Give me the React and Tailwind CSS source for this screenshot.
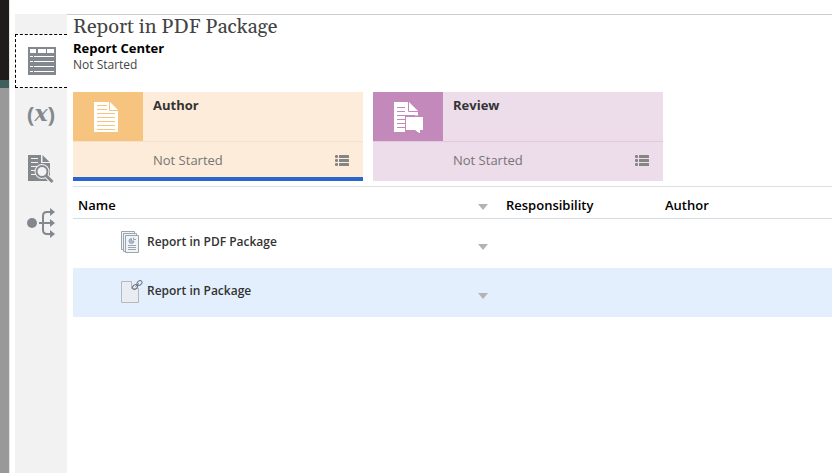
import { useState } from 'react';

const INK = '#83888f';

function TableIcon() {
  return (
    <svg width="28" height="28" viewBox="0 0 28 28" aria-hidden="true">
      <rect width="28" height="28" fill={INK} />
      <path d="M2 2h6v4H2zM10 2h8v4h-8zM19 2h7v4h-7z" fill="#fff" />
      <path
        d="M2 9.500h3M6 9.500h20M2 14.500h3M6 14.500h20M2 19.500h3M6 19.500h20M2 24.500h3M6 24.500h20"
        stroke="#fff"
      />
    </svg>
  );
}

function VariableIcon() {
  return (
    <span className="flex items-center pb-1 text-[#83888f] font-bold text-[22px] leading-none font-['Open_Sans',sans-serif]">
      (<i className="font-['DejaVu_Serif','Liberation_Serif',serif] text-[22px] leading-none">x</i>)
    </span>
  );
}

function InspectIcon() {
  return (
    <svg width="28" height="30" viewBox="0 0 28 30" aria-hidden="true">
      <path d="M1 1h13v8h9v18H1z" fill={INK} />
      <path d="M15.500 1l7 7h-7z" fill={INK} />
      <path d="M4 4.500h7M4 8.500h7M4 12.500h6M4 16.500h4M4 20.500h5" stroke="#f2f2f2" />
      <circle cx="15" cy="17.500" r="7.500" fill="#f2f2f2" />
      <path d="M18 20.500l8 8" stroke="#f2f2f2" strokeWidth="5" />
      <circle cx="15" cy="17.500" r="5.500" fill="#f2f2f2" stroke={INK} strokeWidth="2" />
      <path d="M19 21.500l6.500 6.500" stroke={INK} strokeWidth="3" />
    </svg>
  );
}

function FlowIcon() {
  return (
    <svg width="30" height="30" viewBox="0 0 30 30" fill="none" stroke={INK} strokeWidth="2" aria-hidden="true">
      <circle cx="6" cy="15" r="5" fill={INK} stroke="none" />
      <path d="M13 15h14M27 4h-6q-4 0-4 4v14q0 4 4 4h6" />
      <path d="M24 0l5 4l-5 4zM24 11l5 4l-5 4zM24 22l5 4l-5 4z" fill={INK} stroke="none" />
    </svg>
  );
}

function DocIcon() {
  return (
    <svg width="30" height="32" viewBox="0 0 30 32" aria-hidden="true">
      <path d="M1 1h16l8 8v22H1z" fill="#fff" />
      <path
        d="M16.500 1v8.500H25M4 4.500h10M4 8.500h10M4 12.500h18M4 16.500h18M4 20.500h18M4 24.500h18M4 28.500h18"
        fill="none"
        stroke="#f7c480"
      />
    </svg>
  );
}

function DocCommentIcon() {
  return (
    <svg width="30" height="32" viewBox="0 0 30 32" aria-hidden="true">
      <path d="M1 1h15l9 9v21H1z" fill="#fff" />
      <path
        d="M15.500 1v9.500H25M4 6.500h8M4 10.500h8M4 14.500h18M4 18.500h8M4 22.500h8M4 26.500h8"
        fill="none"
        stroke="#c489bb"
      />
      <path d="M12 14.500h18v17H12z" fill="#c489bb" />
      <path d="M13 16h17v13h-3v3.500l-5-3.500h-9z" fill="#fff" />
    </svg>
  );
}

function ListIcon() {
  return (
    <svg width="14" height="11" viewBox="0 0 14 11" fill="#858585" aria-hidden="true">
      <rect y="0" width="3" height="3" rx="1" />
      <rect x="4" y="0" width="10" height="3" rx="0.500" />
      <rect y="4" width="3" height="3" rx="1" />
      <rect x="4" y="4" width="10" height="3" rx="0.500" />
      <rect y="8" width="3" height="3" rx="1" />
      <rect x="4" y="8" width="10" height="3" rx="0.500" />
    </svg>
  );
}

function PackageIcon() {
  return (
    <svg width="22" height="24" viewBox="0 0 22 24" fill="#f1f4f7" stroke="#9aa5b1" aria-hidden="true">
      <path d="M0.500 1.500h13v18h-13z" />
      <path d="M2.500 3.500h13v18h-13z" />
      <path d="M4.500 5.500h13v17h-13z" />
      <path d="M10.500 8.500a2.500 2.500 0 1 0 2.500 2.500H10.500z" fill="#b3bcc6" />
      <path d="M12.500 7.500v2h2.500M7 15.500h8M7 17.500h8M7 19.500h8" fill="none" />
    </svg>
  );
}

function LinkedIcon() {
  return (
    <svg width="22" height="24" viewBox="0 0 22 24" fill="none" aria-hidden="true">
      <path d="M0.500 2.500h10v7h7v14h-17z" fill="#e9ecf0" stroke="#b3b9c0" />
      <g stroke="#6d747c">
        <ellipse cx="14" cy="8" rx="2.800" ry="2" transform="rotate(-40 14 8)" />
        <ellipse cx="18.500" cy="4" rx="2.800" ry="2" transform="rotate(-40 18.500 4)" />
        <path d="M14.500 7.500l3.500-3" />
      </g>
    </svg>
  );
}

function MenuArrow({ label }) {
  return (
    <button aria-label={label} className="p-1">
      <svg width="10" height="6" viewBox="0 0 10 6" fill="#b3b3b3" aria-hidden="true">
        <path d="M0 0h10L5 6z" />
      </svg>
    </button>
  );
}

const tabs = [
  { id: 'content', label: 'Content', Icon: TableIcon },
  { id: 'variables', label: 'Variables', Icon: VariableIcon },
  { id: 'inspect', label: 'Inspect', Icon: InspectIcon },
  { id: 'flow', label: 'Flow', Icon: FlowIcon },
];

const phases = [
  { name: 'Author', Icon: DocIcon, body: 'bg-[#fdecd9]', tile: 'bg-[#f7c480]', line: 'border-[#f5e2cc]' },
  { name: 'Review', Icon: DocCommentIcon, body: 'bg-[#eddcea]', tile: 'bg-[#c489bb]', line: 'border-[#dfcbdc]' },
];

const reports = [
  { name: 'Report in PDF Package', Icon: PackageIcon },
  { name: 'Report in Package', Icon: LinkedIcon },
];

export default function App() {
  const [tab, setTab] = useState('content');
  const [phase, setPhase] = useState('Author');
  const [selected, setSelected] = useState('Report in Package');

  return (
    <div className="flex min-h-screen bg-white text-black font-['Open_Sans','Noto_Sans',sans-serif]">
      {/* edge of the page behind the panel */}
      <div className="flex flex-col w-[10px] shrink-0 border-r border-[#e4e4e4]">
        <div className="h-20 bg-[#1e1d1b]" />
        <div className="h-2 bg-[#3f5f5c]" />
        <div className="flex-1 bg-[#999999]" />
      </div>

      <nav className="flex flex-col w-[52px] shrink-0 ml-[5px] mt-[14px] pt-5 bg-[#f2f2f2]">
        {tabs.map(({ id, label, Icon }) => (
          <button
            key={id}
            aria-label={label}
            onClick={() => setTab(id)}
            className={`flex items-center justify-center h-[54px] ${
              tab === id ? 'bg-white pl-px border border-r-0 border-dashed border-black' : ''
            }`}
          >
            <Icon />
          </button>
        ))}
      </nav>

      <main className="flex-1 min-w-0 mt-[14px] pl-[6px] border-t border-[#cccccc]">
        <h1 className="text-xl leading-6 text-[#444444] font-['Gelasio','Liberation_Serif',serif]">
          Report in PDF Package
        </h1>
        <h2 className="text-[13px] leading-[18px] font-bold">Report Center</h2>
        <p className="text-xs leading-4 text-[#444444]">Not Started</p>

        <div className="flex gap-[10px] mt-[19px]">
          {phases.map(({ name, Icon, body, tile, line }) => (
            <section
              key={name}
              className={`w-[290px] ${body} border-b-4 ${phase === name ? 'border-[#2b66cc]' : 'border-transparent'}`}
            >
              <div className={`flex h-[50px] border-b ${line}`}>
                <button
                  aria-label={name}
                  onClick={() => setPhase(name)}
                  className={`flex items-center justify-center w-[70px] ${tile}`}
                >
                  <Icon />
                </button>
                <h3 className="pl-[10px] pt-1 text-[13px] leading-[18px] font-bold text-[#333333]">{name}</h3>
              </div>
              <div className="flex items-center justify-between h-[35px] pt-px pl-20 pr-[14px]">
                <span className="text-[13px] leading-[18px] text-[#757575]">Not Started</span>
                <button aria-label={`${name} list`}>
                  <ListIcon />
                </button>
              </div>
            </section>
          ))}
        </div>

        <table className="w-full mt-[5px] table-fixed border-t border-[#dcdfe2] text-left">
          <thead>
            <tr className="h-8 border-b border-[#d3dde2] text-[13px] leading-[18px]">
              <th className="w-[428px] pt-1 pl-[5px] pr-[9px] font-semibold">
                <div className="flex items-end justify-between">
                  Name
                  <MenuArrow label="Sort by name" />
                </div>
              </th>
              <th className="w-[159px] pt-1 pl-[5px] font-semibold">Responsibility</th>
              <th className="pt-1 pl-[5px] font-semibold">Author</th>
            </tr>
          </thead>
          <tbody>
            {reports.map(({ name, Icon }) => (
              <tr
                key={name}
                onClick={() => setSelected(name)}
                className={`h-[49px] ${selected === name ? 'bg-[#e4effd]' : ''}`}
              >
                <td className="pb-[2px] pl-12 pr-[9px]">
                  <div className="flex items-end">
                    <Icon />
                    <span className="flex-1 pl-1 text-xs leading-6 font-semibold text-[#333333]">{name}</span>
                    <MenuArrow label={`${name} actions`} />
                  </div>
                </td>
                <td />
                <td />
              </tr>
            ))}
          </tbody>
        </table>
      </main>
    </div>
  );
}
